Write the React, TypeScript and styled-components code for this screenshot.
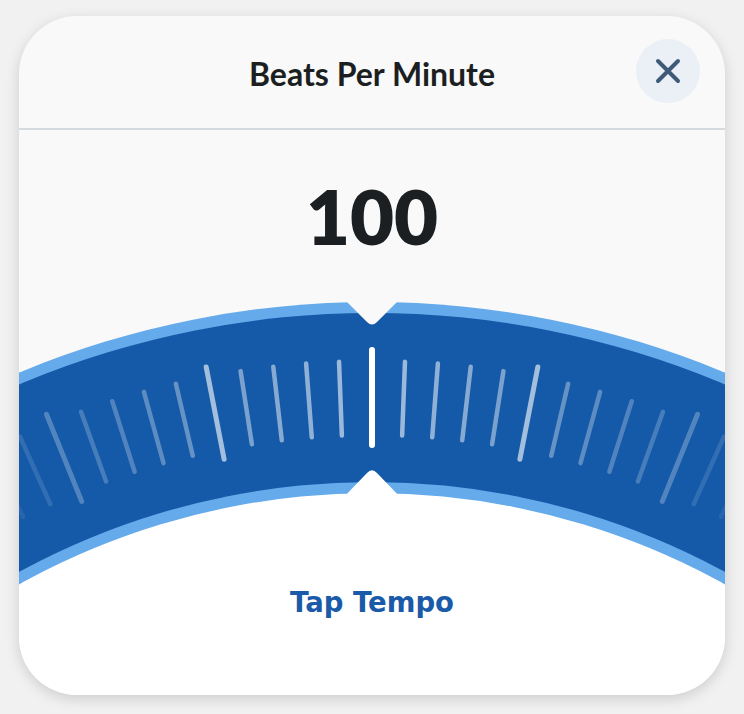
import React from "react";
import styled, { createGlobalStyle } from "styled-components";

const GlobalStyle = createGlobalStyle`
  body {
    margin: 0;
    background: #f1f1f1;
  }
`;

const Page = styled.div`
  padding: 16px 19px 19px;
  font-family: Lato, "Noto Sans", sans-serif;
`;

const Card = styled.section`
  height: 679px;
  display: flex;
  flex-direction: column;
  background: #f9f9f9;
  border-radius: 58px;
  overflow: hidden;
  box-shadow: 0 4px 14px rgba(0, 0, 0, 0.15);
`;

const Header = styled.header`
  height: 112px;
  display: grid;
  grid-template-columns: 1fr auto 1fr;
  align-items: center;
  padding: 0 25px;
  border-bottom: 2px solid #d6dbe0;
`;

const Title = styled.h1`
  grid-column: 2;
  margin: 0;
  padding-top: 2px;
  font-size: 32px;
  font-weight: 700;
  color: #1c1f22;
`;

const CloseButton = styled.button`
  justify-self: end;
  margin-top: -2px;
  width: 64px;
  height: 64px;
  padding: 0;
  border: none;
  border-radius: 50%;
  background: #eaf0f6;
  display: grid;
  place-items: center;
  cursor: pointer;
`;

const Value = styled.div`
  padding: 48px 0 42px;
  text-align: center;
  font-size: 76px;
  line-height: 76px;
  font-weight: 800;
  color: #1c1f22;
`;

const Dial = styled.svg`
  display: block;
  flex-shrink: 0;
`;

const Footer = styled.footer`
  flex: 1;
  background: #fff;
  padding-top: 1px;
  text-align: center;
`;

const TapButton = styled.button`
  border: none;
  background: none;
  padding: 0;
  font-family: "DejaVu Sans", sans-serif;
  font-size: 27.5px;
  line-height: 30px;
  font-weight: 700;
  color: #1a5aa8;
  cursor: pointer;
`;

const W = 706;
const H = 290;
const CX = 353;
const CY = 924;
const STEP = 2.2;

const ticks = Array.from({ length: 27 }, (_, k) => k - 13).filter((i) => i !== 0);

const Tick = ({ i }: { i: number }) => {
  const major = Math.abs(i) % 5 === 0;
  const a = (i * STEP * Math.PI) / 180;
  const r1 = major ? 775 : 785;
  const r2 = major ? 869 : 859;
  const base = Math.max(0.04, 0.62 - 0.045 * Math.abs(i));
  const op = major ? base * 1.55 : base;
  return (
    <line
      x1={CX + r1 * Math.sin(a)}
      y1={CY - r1 * Math.cos(a)}
      x2={CX + r2 * Math.sin(a)}
      y2={CY - r2 * Math.cos(a)}
      stroke="#fff"
      strokeOpacity={op}
      strokeWidth={major ? 5 : 4.5}
      strokeLinecap="round"
    />
  );
};

const TempoDial = () => (
  <Dial width={W} height={H} viewBox={`0 0 ${W} ${H}`}>
    <circle cx={CX} cy={CY} r={918} fill="#65aaeb" />
    <circle cx={CX} cy={CY} r={907} fill="#155aa8" />
    <circle cx={CX} cy={CY} r={738} fill="#65aaeb" />
    <circle cx={CX} cy={CY} r={727} fill="#fff" />
    {ticks.map((i) => (
      <Tick key={i} i={i} />
    ))}
    <line x1={CX} y1={54} x2={CX} y2={149} stroke="#fff" strokeWidth={6} strokeLinecap="round" />
    <path
      d={`M${CX - 31} 0 L${CX - 5} 26 Q${CX} 31 ${CX + 5} 26 L${CX + 31} 0 Z`}
      fill="#f9f9f9"
    />
    <path
      d={`M${CX - 31} 204 L${CX - 5} 177 Q${CX} 171.5 ${CX + 5} 177 L${CX + 31} 204 Z`}
      fill="#fff"
    />
  </Dial>
);

const CloseIcon = () => (
  <svg width="26" height="26" viewBox="0 0 26 26">
    <path
      d="M3 3 L23 23 M23 3 L3 23"
      stroke="#405b78"
      strokeWidth="4"
      strokeLinecap="round"
    />
  </svg>
);

const App = () => {
  return (
    <Page>
      <GlobalStyle />
      <Card>
        <Header>
          <Title>Beats Per Minute</Title>
          <CloseButton aria-label="Close">
            <CloseIcon />
          </CloseButton>
        </Header>
        <Value>100</Value>
        <TempoDial />
        <Footer>
          <TapButton>Tap Tempo</TapButton>
        </Footer>
      </Card>
    </Page>
  );
};

export default App;
